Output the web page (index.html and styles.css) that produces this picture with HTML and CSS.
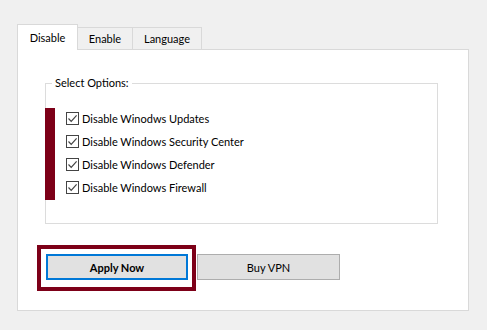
FILE: index.html
```html
<!DOCTYPE html>
<html lang="en">
<head>
  <meta charset="UTF-8">
  <title>Windows Update Blocker</title>
  <link rel="stylesheet" href="styles.css">
</head>
<body>

<div class="tabs">
  <div class="tab active">Disable</div>
  <div class="tab tab-enable">Enable</div>
  <div class="tab tab-lang">Language</div>
</div>

<div class="panel">
  <fieldset class="group">
    <legend>Select Options:</legend>
    <div class="group-body">
      <div class="mark"></div>
      <div class="options">
        <label class="option"><span class="check"><svg width="11" height="11" viewBox="0 0 11 11"><polyline points="1.5,5.5 4.2,8.3 9.6,2.4" fill="none" stroke="#444" stroke-width="1.2"/></svg></span>Disable Winodws Updates</label>
        <label class="option"><span class="check"><svg width="11" height="11" viewBox="0 0 11 11"><polyline points="1.5,5.5 4.2,8.3 9.6,2.4" fill="none" stroke="#444" stroke-width="1.2"/></svg></span>Disable Windows Security Center</label>
        <label class="option"><span class="check"><svg width="11" height="11" viewBox="0 0 11 11"><polyline points="1.5,5.5 4.2,8.3 9.6,2.4" fill="none" stroke="#444" stroke-width="1.2"/></svg></span>Disable Windows Defender</label>
        <label class="option"><span class="check"><svg width="11" height="11" viewBox="0 0 11 11"><polyline points="1.5,5.5 4.2,8.3 9.6,2.4" fill="none" stroke="#444" stroke-width="1.2"/></svg></span>Disable Windows Firewall</label>
      </div>
    </div>
  </fieldset>

  <div class="actions">
    <div class="highlight">
      <button class="btn btn-apply">Apply Now</button>
    </div>
    <button class="btn btn-vpn">Buy VPN</button>
  </div>
</div>

</body>
</html>
```

FILE: styles.css
```css
body { margin: 0; padding: 24px 0 0 17px; background: #f0f0f0; font-family: 'Segoe UI', Lato, 'Liberation Sans', sans-serif; font-size: 11px; color: #000; }

.tabs { display: flex; align-items: flex-end; height: 25px; }
.tab { box-sizing: border-box; height: 22px; line-height: 21px; text-align: center; border: 1px solid #d9d9d9; border-bottom: none; border-left: none; background: #f0f0f0; }
.tab.active { width: 61px; height: 26px; line-height: 25px; margin-bottom: -1px; background: #fff; border-left: 1px solid #d9d9d9; position: relative; z-index: 1; }
.tab-enable { width: 55px; }
.tab-lang { width: 69px; }

.panel { box-sizing: border-box; width: 452px; height: 262px; background: #fff; border: 1px solid #d9d9d9; padding: 25px 0 0 27px; }

.group { box-sizing: border-box; width: 393px; margin: 0; padding: 17px 0 23px 0; border: 1px solid #dcdcdc; }
.group legend { margin-left: 6px; padding: 0 3px; line-height: 16px; }
.group-body { display: flex; }
.mark { width: 10px; margin-left: -1px; background: #7d0018; }
.options { display: flex; flex-direction: column; padding-left: 11px; }
.option { box-sizing: border-box; display: flex; align-items: center; height: 23px; padding-bottom: 2px; }
.check { box-sizing: border-box; width: 13px; height: 13px; border: 1px solid #444; background: #fff; margin-right: 3px; display: flex; align-items: center; justify-content: center; }
.check svg { display: block; }

.actions { display: flex; align-items: flex-start; margin-top: 21px; margin-left: -8px; }
.highlight { border: 4px solid #7d0018; padding: 5px 4px 7px 5px; }
.btn { box-sizing: border-box; height: 26px; background: #e1e1e1; font-family: inherit; font-size: 11px; color: #000; padding: 0; }
.btn-apply { width: 142px; border: 2px solid #0078d7; font-weight: bold; }
.btn-vpn { width: 143px; margin: 9px 0 0 1px; border: 1px solid #adadad; }
```
